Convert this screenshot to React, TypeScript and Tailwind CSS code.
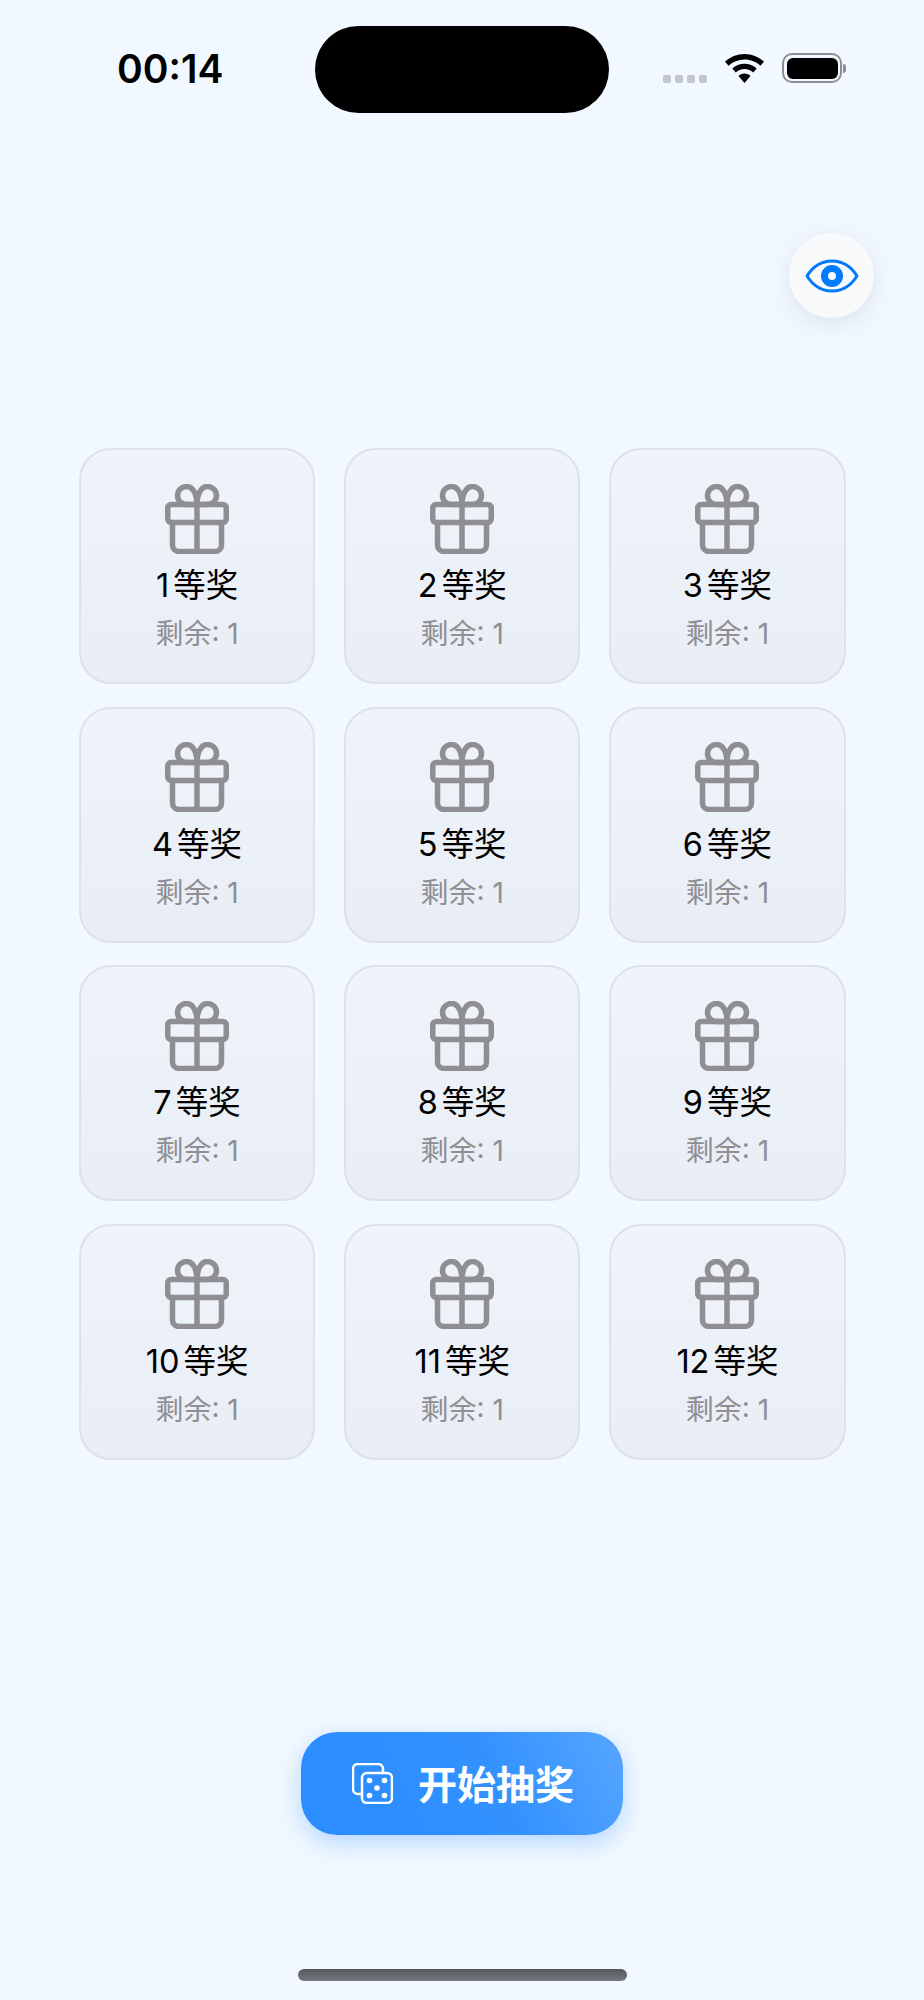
import React from 'react';

const prizes = Array.from({ length: 12 }, (_, i) => i + 1);

const GiftIcon = () => (
    <svg width="64" height="70" viewBox="0 0 64 70" fill="none" stroke="#8e8e93" strokeWidth="5.5" strokeLinejoin="round" strokeLinecap="round">
        <rect x="2.75" y="20.5" width="58.5" height="18" rx="3.5" />
        <path d="M7.5 38.5V61a6.5 6.5 0 0 0 6.5 6.5h36a6.5 6.5 0 0 0 6.5-6.5V38.5" />
        <path d="M32 20.5V67.5" />
        <path d="M32 20.5H21.5a9 9 0 1 1 0-18c6.5 0 10.5 8 10.5 18z" />
        <path d="M32 20.5h10.5a9 9 0 1 0 0-18c-6.5 0-10.5 8-10.5 18z" />
    </svg>
);

const EyeIcon = () => (
    <svg width="54" height="34" viewBox="0 0 54 34" fill="none" stroke="#007aff">
        <path d="M2 17C8 7.500 16.500 2 27 2s19 5.500 25 15c-6 9.500-14.500 15-25 15S8 26.500 2 17z" strokeWidth="3" strokeLinejoin="round" />
        <circle cx="27" cy="17" r="7.500" strokeWidth="7" />
    </svg>
);

const DiceIcon = () => (
    <svg width="41" height="41" viewBox="0 0 41 41" fill="none" stroke="#ffffff" strokeWidth="2.500" strokeLinecap="round">
        <path d="M10 31H6a5 5 0 0 1-5-5V6a5 5 0 0 1 5-5h20a5 5 0 0 1 5 5v4" />
        <rect x="10" y="10" width="30" height="30" rx="5" />
        <g fill="#ffffff" stroke="none">
            <circle cx="17.500" cy="17.500" r="2.800" />
            <circle cx="32.500" cy="17.500" r="2.800" />
            <circle cx="25" cy="25" r="2.800" />
            <circle cx="17.500" cy="32.500" r="2.800" />
            <circle cx="32.500" cy="32.500" r="2.800" />
        </g>
    </svg>
);

const WifiIcon = () => (
    <svg width="39" height="29" viewBox="0 0 39 29" fill="#000000">
        <path d="M19.500 0C27 0 33.800 3 39 7.800l-3.600 4C31.200 7.900 25.800 5.600 19.500 5.600S7.800 7.900 3.600 11.800L0 7.800C5.200 3 12 0 19.500 0z" />
        <path d="M19.500 9.800c4.700 0 9 1.800 12.200 4.800l-3.500 3.900c-2.300-2.100-5.300-3.400-8.700-3.400s-6.400 1.300-8.700 3.400l-3.500-3.900c3.200-3 7.500-4.800 12.200-4.800z" />
        <path d="M19.500 19.600c2.300 0 4.400.9 6 2.300L19.500 29l-6-7.100c1.600-1.400 3.700-2.300 6-2.300z" />
    </svg>
);

const BatteryIcon = () => (
    <div className="flex items-center">
        <div className="w-[60px] h-[30px] rounded-[10px] border-[2.5px] border-[#8e8e93] p-[2.5px]">
            <div className="w-full h-full rounded-[6px] bg-black" />
        </div>
        <div className="w-[3px] h-[9px] ml-[1px] rounded-r-full bg-[#8e8e93]" />
    </div>
);

const PrizeCard = ({ n }: { n: number }) => (
    <div className="h-[236px] rounded-[32px] border-2 border-[#dde1ea] bg-gradient-to-b from-[#eff3fa] to-[#e9edf5] flex flex-col items-center pt-[33.5px]">
        <GiftIcon />
        <div className="mt-[11.5px] h-[42px] flex items-center text-[32.5px] leading-[42px] text-black">
            <span className="mr-[4px]">{n}</span>
            <span>等奖</span>
        </div>
        <div className="mt-[9px] text-[28px] leading-[36px] text-[#8e8e93]">剩余: 1</div>
    </div>
);

export default function App() {
    return (
        <div className="w-[924px] h-[2000px] bg-[#f2f8ff] flex flex-col font-['Inter','Noto_Sans_CJK_SC',sans-serif]">
            <div className="h-[113px] flex items-start">
                <div className="w-[315px] pl-[117px] pt-[47px] text-[39px] leading-[44px] font-semibold text-black">00:14</div>
                <div className="w-[294px] h-[87px] mt-[26px] rounded-full bg-black" />
                <div className="flex items-start pl-[54px]">
                    <div className="flex gap-[4px] mt-[75px]">
                        <div className="w-[8px] h-[8px] rounded-[2px] bg-[#c2c6ce]" />
                        <div className="w-[8px] h-[8px] rounded-[2px] bg-[#c2c6ce]" />
                        <div className="w-[8px] h-[8px] rounded-[2px] bg-[#c2c6ce]" />
                        <div className="w-[8px] h-[8px] rounded-[2px] bg-[#c2c6ce]" />
                    </div>
                    <div className="ml-[18px] mt-[54px]"><WifiIcon /></div>
                    <div className="ml-[18px] mt-[53px]"><BatteryIcon /></div>
                </div>
            </div>

            <div className="mt-[120px] pr-[50px] flex justify-end">
                <button className="w-[85px] h-[85px] rounded-full bg-[#f9fafc] shadow-[0_6px_24px_rgba(60,80,120,0.12)] flex items-center justify-center">
                    <EyeIcon />
                </button>
            </div>

            <div className="mt-[130px] ml-[79px] mr-[78.5px] grid grid-cols-3 gap-x-[29px] gap-y-[22.6px]">
                {prizes.map(n => (
                    <PrizeCard key={n} n={n} />
                ))}
            </div>

            <div className="mt-[272.2px] flex justify-center">
                <button className="w-[322px] h-[103px] pl-[2px] rounded-[36px] bg-[linear-gradient(65deg,#2a8cff_0%,#3391ff_60%,#57a6ff_100%)] shadow-[0_8px_24px_rgba(40,140,255,0.3)] flex items-center justify-center gap-[25px]">
                    <DiceIcon />
                    <span className="mt-[3px] text-[39px] leading-[48px] font-semibold text-white">开始抽奖</span>
                </button>
            </div>

            <div className="mt-[134px] flex justify-center">
                <div className="w-[329px] h-[12px] rounded-full bg-gradient-to-b from-[#55585d] to-[#75787d]" />
            </div>
        </div>
    );
}
